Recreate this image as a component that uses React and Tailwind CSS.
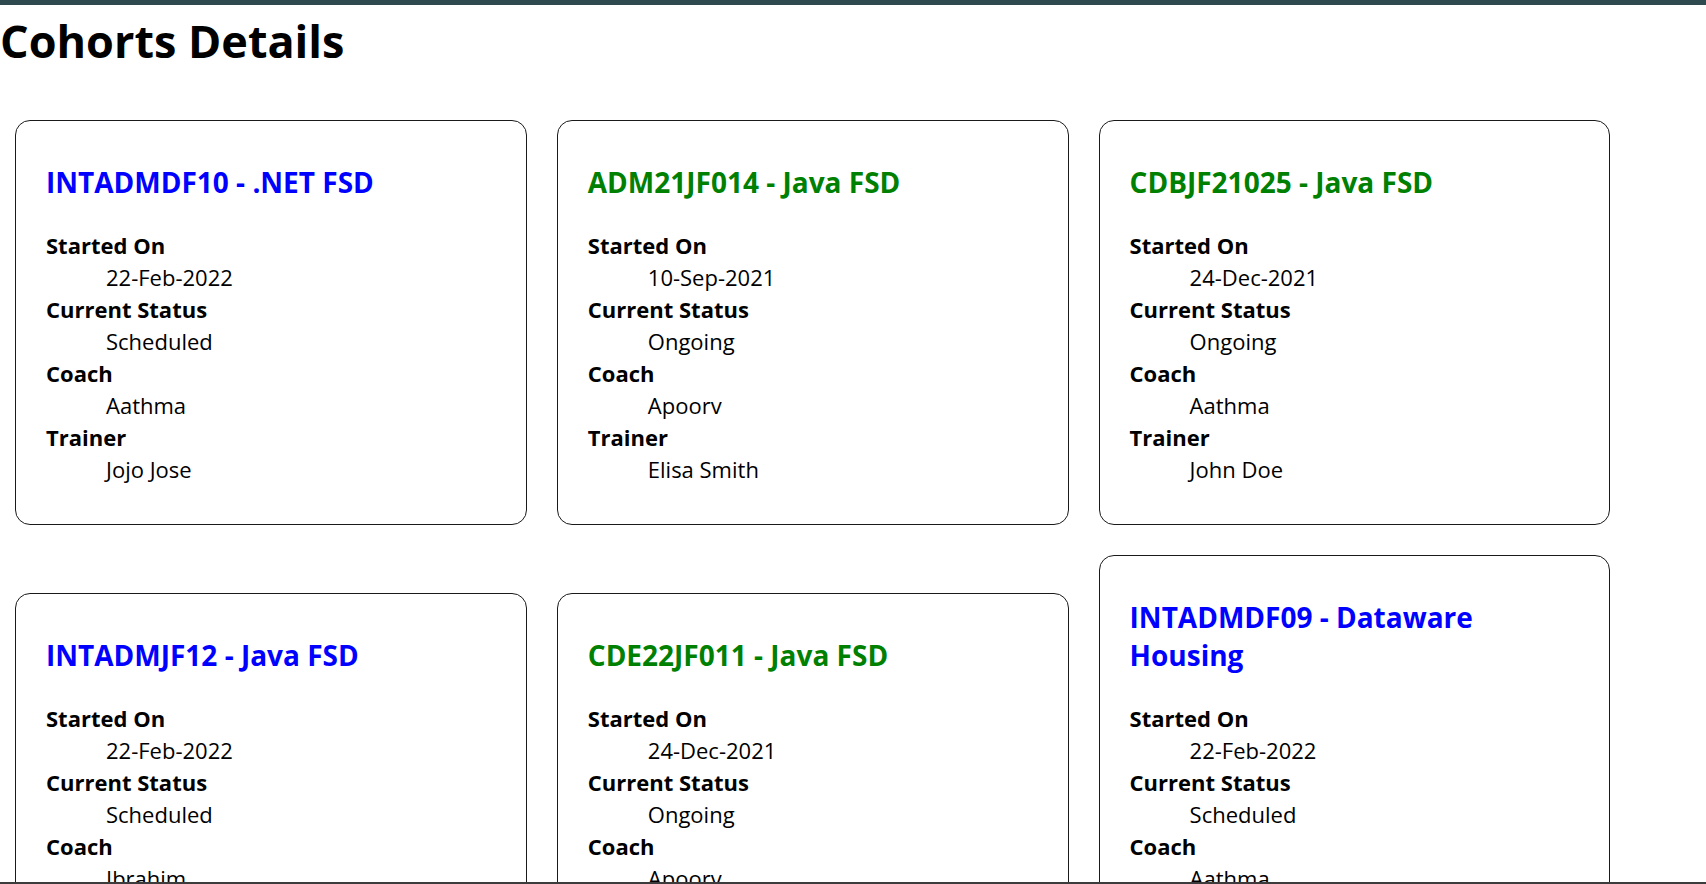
import React from 'react';

const cohorts = [
  { code: 'INTADMDF10', tech: '.NET FSD', startedOn: '22-Feb-2022', status: 'Scheduled', coach: 'Aathma', trainer: 'Jojo Jose' },
  { code: 'ADM21JF014', tech: 'Java FSD', startedOn: '10-Sep-2021', status: 'Ongoing', coach: 'Apoorv', trainer: 'Elisa Smith' },
  { code: 'CDBJF21025', tech: 'Java FSD', startedOn: '24-Dec-2021', status: 'Ongoing', coach: 'Aathma', trainer: 'John Doe' },
  { code: 'INTADMJF12', tech: 'Java FSD', startedOn: '22-Feb-2022', status: 'Scheduled', coach: 'Ibrahim', trainer: 'Jojo Jose' },
  { code: 'CDE22JF011', tech: 'Java FSD', startedOn: '24-Dec-2021', status: 'Ongoing', coach: 'Apoorv', trainer: 'Elisa Smith' },
  { code: 'INTADMDF09', tech: 'Dataware Housing', startedOn: '22-Feb-2022', status: 'Scheduled', coach: 'Aathma', trainer: 'John Doe' },
];

const CohortCard = ({ cohort }) => {
  // Ongoing cohorts in green, everything else in blue
  const titleColor = cohort.status === 'Ongoing' ? 'text-[#008000]' : 'text-[#0000ff]';

  return (
    <div className="w-[30%] m-[15px] px-[30px] py-[15px] border border-[#1a1a1a] rounded-[15px] bg-white">
      <h3 className={`${titleColor} text-[28px] leading-[38px] font-bold mt-[27px] mb-[28px]`}>
        {cohort.code} - {cohort.tech}
      </h3>
      <dl className="text-[22px] leading-8 mb-6">
        <dt className="font-bold">Started On</dt>
        <dd className="ml-[60px]">{cohort.startedOn}</dd>
        <dt className="font-bold">Current Status</dt>
        <dd className="ml-[60px]">{cohort.status}</dd>
        <dt className="font-bold">Coach</dt>
        <dd className="ml-[60px]">{cohort.coach}</dd>
        <dt className="font-bold">Trainer</dt>
        <dd className="ml-[60px]">{cohort.trainer}</dd>
      </dl>
    </div>
  );
};

const App = () => {
  return (
    <div
      className="h-screen flex flex-col overflow-hidden bg-white text-black"
      style={{ fontFamily: '"Open Sans", "Noto Sans", sans-serif' }}
    >
      <div className="h-[5px] shrink-0 bg-[#2e4a4e]" />

      <main className="flex-1 overflow-hidden">
        <h1 className="text-[45px] leading-[64px] font-bold mt-1 mb-8">Cohorts Details</h1>

        {/* Cohort cards, bottoms lined up per row */}
        <div className="flex flex-wrap items-end">
          {cohorts.map((cohort) => (
            <CohortCard key={cohort.code} cohort={cohort} />
          ))}
        </div>
      </main>

      <div className="h-[2px] shrink-0 bg-[#3c3c3c]" />
    </div>
  );
};

export default App;
